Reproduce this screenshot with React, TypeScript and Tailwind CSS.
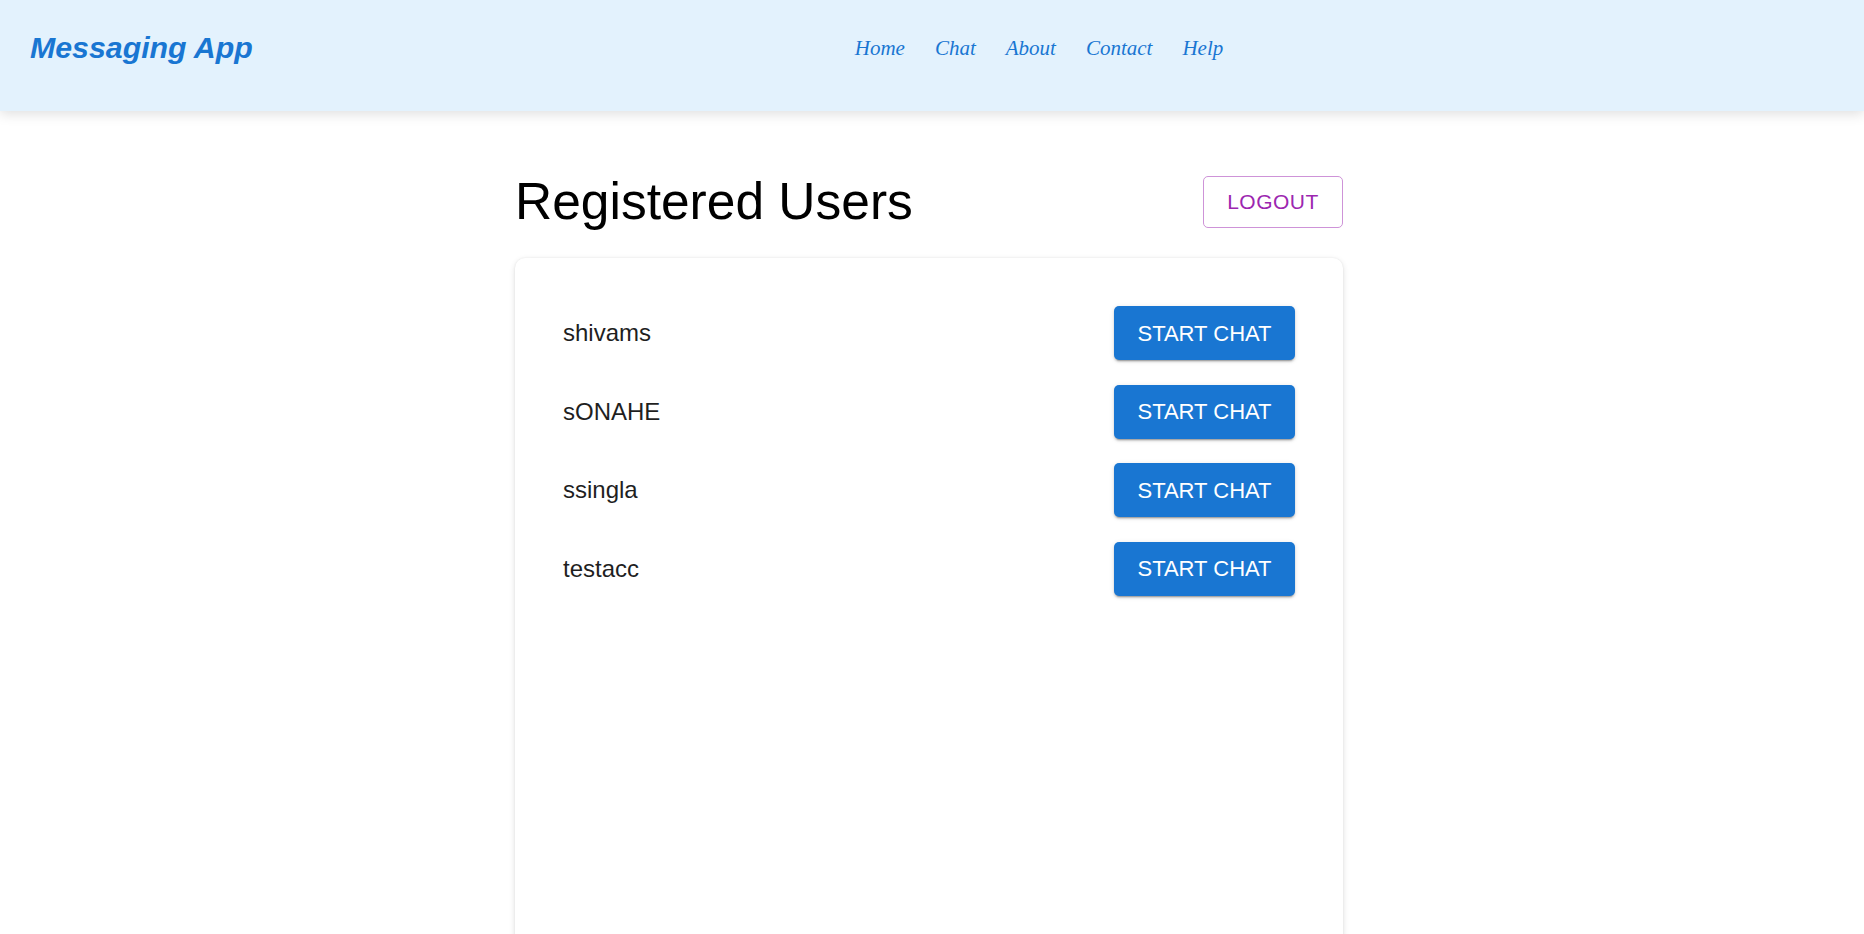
import React from "react";

const users = ["shivams", "sONAHE", "ssingla", "testacc"];
const links = ["Home", "Chat", "About", "Contact", "Help"];

export default function App() {
  return (
    <div className="min-h-screen bg-white font-['Liberation_Sans',Arial,sans-serif]">
      {/* Header */}
      <header className="h-[111px] bg-[#e3f2fd] shadow-[0_3px_12px_rgba(0,0,0,0.13)]">
        <div className="flex h-24 items-center pl-[30px]">
          <h1 className="text-[30.3px] font-bold italic leading-none text-[#1976d2]">Messaging App</h1>
          <nav className="ml-[602px] flex items-center gap-[30px] font-['Liberation_Serif','Times_New_Roman',serif] text-[21px] italic text-[#1976d2]">
            {links.map((l) => (
              <a key={l} href="#" className="leading-none">
                {l}
              </a>
            ))}
          </nav>
        </div>
      </header>

      {/* Main */}
      <main className="ml-[515px] w-[828px] pt-[65px]">
        <div className="flex items-center justify-between">
          <h2 className="text-[51.5px] font-normal leading-none text-black">Registered Users</h2>
          <button className="h-[52px] w-[140px] rounded-[5px] border border-[#ce93d8] text-[21px] tracking-[0.5px] text-[#9c27b0]">
            LOGOUT
          </button>
        </div>

        <div className="mt-[30px] min-h-[700px] rounded-[10px] bg-white px-12 py-9 shadow-[0_2px_6px_rgba(0,0,0,0.12),0_0_2px_rgba(0,0,0,0.08)]">
          {users.map((u) => (
            <div key={u} className="flex items-center justify-between py-[12.25px]">
              <span className="text-[24px] text-[#1f1f1f]">{u}</span>
              <button className="h-[54px] w-[181px] rounded-[5px] bg-[#1976d2] text-[22px] text-white shadow-[0_3px_1px_-2px_rgba(0,0,0,0.2),0_2px_2px_0_rgba(0,0,0,0.14),0_1px_5px_0_rgba(0,0,0,0.12)]">
                START CHAT
              </button>
            </div>
          ))}
        </div>
      </main>
    </div>
  );
}
